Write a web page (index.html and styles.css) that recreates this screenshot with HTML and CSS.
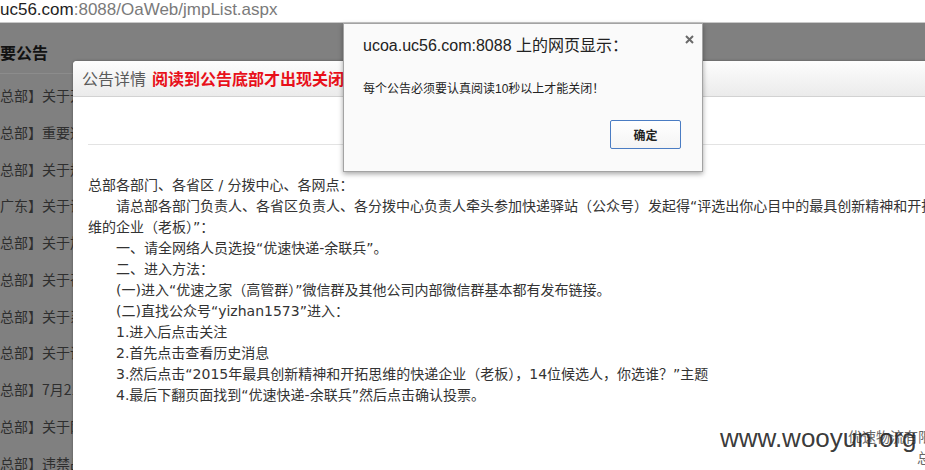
FILE: index.html
```html
<!DOCTYPE html>
<html lang="zh-CN">
<head>
<meta charset="utf-8">
<title>jmpList</title>
<link rel="stylesheet" href="styles.css">
</head>
<body>
<div class="addr"><span class="host">uc56.com</span><span class="path">:8088/OaWeb/jmpList.aspx</span></div>
<div class="page">
  <aside class="list">
    <h2 class="list-title">重要公告</h2>
    <ul class="rows">
      <li>【总部】关于开展快递驿站评选活动的通知</li>
      <li>【总部】重要通知</li>
      <li>【总部】关于规范网点操作的通知</li>
      <li>【广东】关于调整派送时效的通知</li>
      <li>【总部】关于加强安全管理的通知</li>
      <li>【总部】关于召开月度会议的通知</li>
      <li>【总部】关于系统升级的通知</li>
      <li>【总部】关于调整运费标准的通知</li>
      <li>【总部】7月21日运营例会纪要</li>
      <li>【总部】关于网点考核的通知</li>
      <li>【总部】违禁品收寄管理规定</li>
    </ul>
  </aside>
  <section class="modal">
    <header class="modal-head"><span class="modal-title">公告详情</span><span class="modal-warn">阅读到公告底部才出现关闭</span></header>
    <div class="modal-body">
      <hr class="sep">
      <div class="article">
        <p>总部各部门、各省区 / 分拨中心、各网点：</p>
        <p class="ind">请总部各部门负责人、各省区负责人、各分拨中心负责人牵头参加快递驿站（公众号）发起得“评选出你心目中的最具创新精神和开拓思维的企业（老板）”：</p>
        <p class="ind">一、请全网络人员选投“优速快递-余联兵”。</p>
        <p class="ind">二、进入方法：</p>
        <p class="ind">(一)进入“优速之家（高管群）”微信群及其他公司内部微信群基本都有发布链接。</p>
        <p class="ind">(二)直找公众号“yizhan1573”进入：</p>
        <p class="ind">1.进入后点击关注</p>
        <p class="ind">2.首先点击查看历史消息</p>
        <p class="ind">3.然后点击“2015年最具创新精神和开拓思维的快递企业（老板），14位候选人，你选谁？”主题</p>
        <p class="ind">4.最后下翻页面找到“优速快递-余联兵”然后点击确认投票。</p>
      </div>
      <div class="sign">
        <p class="sign-co">优速物流有限公司</p>
        <p class="sign-dept">总部行政中心</p>
      </div>
    </div>
  </section>
</div>
<div class="alert" role="alertdialog">
  <svg class="alert-close" width="9" height="9" viewBox="0 0 9 9"><path d="M1 1L8 8M8 1L1 8" stroke="#6a6a6a" stroke-width="2"/></svg>
  <div class="alert-title">ucoa.uc56.com:8088 上的网页显示：</div>
  <div class="alert-msg">每个公告必须要认真阅读10秒以上才能关闭！</div>
  <div class="alert-actions"><button class="alert-btn">确定</button></div>
</div>
<div class="watermark">www.wooyun.org</div>
</body>
</html>
```
FILE: styles.css
```css
html, body {
  margin: 0;
  padding: 0;
}
body {
  width: 925px;
  height: 470px;
  overflow: hidden;
  position: relative;
  background: #808080;
  font-family: "DejaVu Sans", "Noto Sans CJK SC", sans-serif;
}
.addr {
  height: 22px;
  background: #fff;
  border-bottom: 1px solid #c9c9c9;
  font-family: "Liberation Sans", "Noto Sans CJK SC", sans-serif;
  font-size: 17px;
  line-height: 19px;
  white-space: nowrap;
  overflow: hidden;
}
.host { color: #1e1e1e; }
.path { color: #7a7a7a; }

.page {
  position: relative;
  height: 447px;
}
.list {
  width: 320px;
  font-family: "Noto Sans CJK SC", sans-serif;
}
.list-title {
  margin: 0 0 0 -16px;
  padding-top: 8px;
  height: 42px;
  line-height: 42px;
  font-size: 16px;
  font-weight: bold;
  color: #121212;
  border-bottom: 1px solid #8c8c8c;
}
.rows {
  list-style: none;
  margin: 0;
  padding: 3px 0 0;
}
.rows li {
  height: 36.75px;
  line-height: 36.75px;
  margin-left: -14px;
  font-size: 14px;
  color: #2e2e2e;
  white-space: nowrap;
}

.modal {
  position: absolute;
  left: 73px;
  top: 38px;
  width: 896px;
  height: 480px;
  background: #fff;
  border-radius: 4px 0 0 0;
  box-shadow: 0 0 3px rgba(0, 0, 0, 0.35);
}
.modal-head {
  height: 35px;
  line-height: 35px;
  padding-left: 9px;
  border-bottom: 1px solid #d2d2d2;
  border-radius: 4px 0 0 0;
  background: linear-gradient(#fdfdfd, #ebebeb);
  font-family: "Noto Sans CJK SC", sans-serif;
  font-size: 16px;
  white-space: nowrap;
}
.modal-title {
  color: #5a5a5a;
  margin-right: 6px;
}
.modal-warn {
  color: #e8101a;
  font-weight: bold;
}
.modal-body {
  padding: 0 15px;
}
.sep {
  margin: 47px 0 0;
  border: 0;
  border-top: 1px solid #e3e3e3;
  height: 0;
}
.article {
  margin-top: 30px;
  width: 866px;
  font-size: 14px;
  line-height: 21px;
  color: #333;
}
.article p {
  margin: 0;
}
.article .ind {
  text-indent: 28px;
}
.sign {
  margin-top: 21px;
  font-size: 14px;
  line-height: 21px;
  color: #666;
  white-space: nowrap;
}
.sign p { margin: 0; }
.sign-co { padding-left: 760px; }
.sign-dept { padding-left: 829px; }

.alert {
  position: absolute;
  left: 343px;
  top: 23px;
  width: 358px;
  height: 147px;
  background: #fafafa;
  border: 1px solid #a3a3a3;
  box-shadow: 0 2px 5px rgba(0, 0, 0, 0.35);
  display: flex;
  flex-direction: column;
  font-family: "Liberation Sans", "Noto Sans CJK SC", sans-serif;
}
.alert-close {
  position: absolute;
  left: 341px;
  top: 11px;
}
.alert-title {
  padding: 12px 0 0 19px;
  font-size: 16px;
  line-height: 20px;
  color: #222;
  white-space: nowrap;
}
.alert-msg {
  margin-top: 25px;
  padding-left: 19px;
  font-size: 12px;
  line-height: 16px;
  color: #222;
  white-space: nowrap;
}
.alert-actions {
  display: flex;
  justify-content: flex-end;
  padding: 23px 21px 0 0;
}
.alert-btn {
  width: 71px;
  height: 29px;
  padding: 0;
  border: 1px solid #4a7cc3;
  border-radius: 2px;
  background: linear-gradient(#ffffff, #f4f4f4);
  font-family: "Noto Sans CJK SC", sans-serif;
  font-size: 12px;
  font-weight: bold;
  color: #222;
}

.watermark {
  position: absolute;
  left: 720px;
  top: 423px;
  font-family: "Liberation Sans", sans-serif;
  font-size: 26px;
  line-height: 30px;
  color: rgba(40, 40, 40, 0.92);
  white-space: nowrap;
}
```
